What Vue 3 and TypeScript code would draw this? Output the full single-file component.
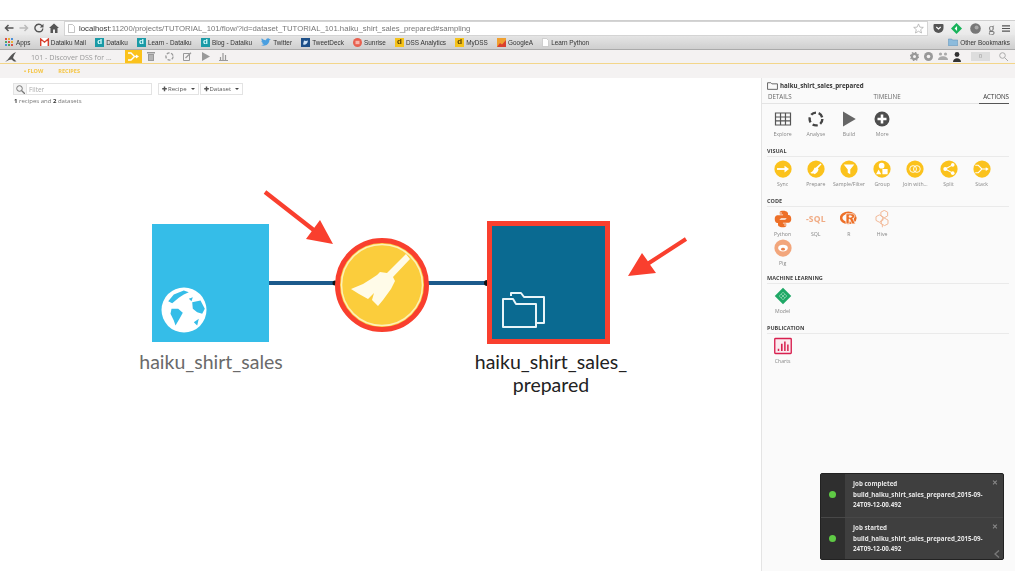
<script setup lang="ts">
interface Bookmark {
  label: string
  icon: string
}
interface Action {
  label: string
  icon: string
}
interface Section {
  title: string
  wrap?: boolean
  items: Action[]
}

const bookmarks: Bookmark[] = [
  { label: 'Dataiku Mail', icon: 'mail' },
  { label: 'Dataiku', icon: 'teal' },
  { label: 'Learn - Dataiku', icon: 'teal' },
  { label: 'Blog - Dataiku', icon: 'teal' },
  { label: 'Twitter', icon: 'bird' },
  { label: 'TweetDeck', icon: 'deck' },
  { label: 'Sunrise', icon: 'sun' },
  { label: 'DSS Analytics', icon: 'gold' },
  { label: 'MyDSS', icon: 'gold' },
  { label: 'GoogleA', icon: 'ga' },
  { label: 'Learn Python', icon: 'page' },
]

const icons: Record<string, string> = {
  table:
    '<path fill="none" stroke="#555" stroke-width="1.6" d="M2 4h20v16H2zM2 9.3h20M2 14.6h20M8.7 4v16M15.3 4v16"/>',
  analyse:
    '<circle cx="12" cy="12" r="8.5" fill="none" stroke="#444" stroke-width="3.2" stroke-dasharray="7 3.68"/>',
  build: '<path fill="#666" d="M4 2l17 10L4 22z"/>',
  more: '<circle cx="12" cy="12" r="10" fill="#4d4d4d"/><path stroke="#fff" stroke-width="3.4" d="M12 6v12M6 12h12"/>',
  sync: '<circle cx="12" cy="12" r="11.5" fill="#fbc21c"/><path fill="none" stroke="#fff" stroke-width="2.4" d="M4 12h12"/><path fill="#fff" d="M14 7.5l6 4.5-6 4.5z"/>',
  prepare:
    '<circle cx="12" cy="12" r="11.5" fill="#fbc21c"/><path fill="#fff" d="M18 4.5l1.4 1.3-5 5.4 1 1.2c-.4 3-2.6 5.4-5.2 6.6l-1.4-1.2-.8.7-1-1-1.5.4-.9-1.2c2.3-.4 4.3-2.6 5.4-6.3l1.5-.1z"/>',
  filter:
    '<circle cx="12" cy="12" r="11.5" fill="#fbc21c"/><path fill="#fff" d="M5 6h14l-5.3 6.5V19l-3.4-2v-4.5z"/>',
  group:
    '<circle cx="12" cy="12" r="11.5" fill="#fbc21c"/><circle cx="11.5" cy="7.5" r="3.8" fill="#fff"/><path fill="#fff" d="M4 19l3.5-6.5L11 19z"/><path fill="#fff" d="M12.5 12h7v7h-7z"/>',
  join: '<circle cx="12" cy="12" r="11.5" fill="#fbc21c"/><circle cx="9.5" cy="12" r="4.5" fill="none" stroke="#fff" stroke-width="1.2"/><circle cx="14.5" cy="12" r="4.5" fill="none" stroke="#fff" stroke-width="1.2"/>',
  split:
    '<circle cx="12" cy="12" r="11.5" fill="#fbc21c"/><path fill="none" stroke="#fff" stroke-width="1.5" d="M17 6.5L7 12l10 5.5"/><circle cx="7" cy="12" r="2.6" fill="#fff"/><circle cx="17" cy="6.5" r="2.4" fill="#fff"/><circle cx="17" cy="17.5" r="2.4" fill="#fff"/>',
  stack:
    '<circle cx="12" cy="12" r="11.5" fill="#fbc21c"/><path fill="none" stroke="#fff" stroke-width="1.5" d="M3 7h4l5 5-5 5H3M12 12h7"/><path fill="#fff" d="M17 9.5l4 2.5-4 2.5z"/>',
  python:
    '<path fill="#ed6f27" d="M11.8 1C7.5 1 7.7 3 7.7 3v3h4.4v1H5.5S1 6.5 1 12s3.8 5.3 3.8 5.3h2.3v-2.6s-.1-3.8 3.7-3.8h4.4s3.5 0 3.5-3.4V4.5S18.3 1 11.8 1zM9.3 3a1 1 0 110 2 1 1 0 010-2z"/><path fill="#ed6f27" d="M12.2 23c4.3 0 4.1-2 4.1-2v-3h-4.4v-1h6.6s4.5.5 4.5-5-3.8-5.3-3.8-5.3h-2.3v2.6s.1 3.8-3.7 3.8H8.8s-3.5 0-3.5 3.4v3.5S5.7 23 12.2 23zm2.5-2a1 1 0 110-2 1 1 0 010 2z"/>',
  r: '<ellipse cx="11" cy="10.5" rx="9.5" ry="6.8" fill="none" stroke="#ed6f27" stroke-width="3.4"/><path fill="#ed6f27" stroke="#fafafa" stroke-width="1" d="M8 5h8.5c4 0 4.5 5.5.5 6.2l3.5 7.3h-4.700L13 12.200h-.8v6.300H8zm4.200 2.700v1.800h2.300c1.500 0 1.500-1.800 0-1.800z"/>',
  hive: '<g fill="none" stroke="#f2b795" stroke-width="1.3"><path d="M15 .5l4.500 2.400v5l-4.500 2.400-4.500-2.400v-5zM8.500 6.500l4.500 2.400v5l-4.500 2.400L4 13.900v-5zM15.500 11l4.500 2.400v5l-4.500 2.400-4.500-2.400v-5zM9 17l3.500 2v4"/></g>',
  pig: '<circle cx="12" cy="12" r="11.5" fill="#f2a67c"/><ellipse cx="12" cy="12" rx="6.5" ry="4.5" fill="#fff"/><ellipse cx="12" cy="13.5" rx="2.6" ry="1.8" fill="#e9824b"/>',
  model:
    '<path fill="#1fa866" d="M12 1l11 11-11 11L1 12z"/><path fill="none" stroke="#bfead2" stroke-width=".8" d="M7 12l5-5 5 5-5 5zM9.500 9.500l5 5M14.500 9.500l-5 5"/>',
  charts:
    '<rect x="1" y="2" width="22" height="20" rx="1" fill="#fbeaef" stroke="#d8204f" stroke-width="1.8"/><path fill="#d8204f" d="M5 15.500h2v3H5zM9.300 9h2.200v9.500H9.300zM13.500 6h2v12.500h-2zM17.500 10h2v8.500h-2z"/>',
}

const sections: Section[] = [
  {
    title: '',
    items: [
      { label: 'Explore', icon: 'table' },
      { label: 'Analyse', icon: 'analyse' },
      { label: 'Build', icon: 'build' },
      { label: 'More', icon: 'more' },
    ],
  },
  {
    title: 'VISUAL',
    items: [
      { label: 'Sync', icon: 'sync' },
      { label: 'Prepare', icon: 'prepare' },
      { label: 'Sample/Filter', icon: 'filter' },
      { label: 'Group', icon: 'group' },
      { label: 'Join with...', icon: 'join' },
      { label: 'Split', icon: 'split' },
      { label: 'Stack', icon: 'stack' },
    ],
  },
  {
    title: 'CODE',
    wrap: true,
    items: [
      { label: 'Python', icon: 'python' },
      { label: 'SQL', icon: 'sql' },
      { label: 'R', icon: 'r' },
      { label: 'Hive', icon: 'hive' },
      { label: 'Pig', icon: 'pig' },
    ],
  },
  { title: 'MACHINE LEARNING', items: [{ label: 'Model', icon: 'model' }] },
  { title: 'PUBLICATION', items: [{ label: 'Charts', icon: 'charts' }] },
]

const toasts = [
  { title: 'Job completed', body: 'build_haiku_shirt_sales_prepared_2015-09-24T09-12-00.492' },
  { title: 'Job started', body: 'build_haiku_shirt_sales_prepared_2015-09-24T09-12-00.492' },
]
</script>

<template>
  <div class="page">
    <div class="chrome">
      <div class="top-strip"></div>
      <div class="toolbar">
        <div class="nav">
          <svg width="10" height="10" viewBox="0 0 10 10"><path fill="none" stroke="#555" stroke-width="1.5" d="M9.5 5H1.500M4.500 2L1.500 5l3 3" /></svg>
          <svg width="10" height="10" viewBox="0 0 10 10"><path fill="none" stroke="#bbb" stroke-width="1.5" d="M.5 5h8M5.500 2l3 3-3 3" /></svg>
          <svg width="10" height="10" viewBox="0 0 10 10"><path fill="none" stroke="#555" stroke-width="1.4" d="M8 3A3.800 3.800 0 104.800 8.800 3.800 3.800 0 008.800 5.500" /><path fill="#555" d="M9.500 .8v3.700H5.800z" /></svg>
          <svg width="10" height="10" viewBox="0 0 10 10"><path fill="#555" d="M5 .5L10 5H8.500v5H6V6.500H4V10H1.500V5H0z" /></svg>
        </div>
        <div class="url">
          <svg width="7" height="9" viewBox="0 0 7 9"><path fill="#fff" stroke="#aaa" stroke-width=".7" d="M.5.500h4l2 2v6h-6z" /></svg>
          <span class="host">localhost</span><span>:11200/projects/TUTORIAL_101/flow/?id=dataset_TUTORIAL_101.haiku_shirt_sales_prepared#sampling</span>
          <svg class="star" width="11" height="11" viewBox="0 0 24 24"><path fill="none" stroke="#aaa" stroke-width="1.6" d="M12 2l3 7 7.500.6-5.700 4.900 1.800 7.300L12 18l-6.600 3.800 1.800-7.300L1.500 9.600 9 9z" /></svg>
        </div>
        <div class="exts">
          <svg width="11" height="9" viewBox="0 0 10 9"><path fill="#555" d="M0 1a1 1 0 011-1h8a1 1 0 011 1v3a5 5 0 01-10 0z" /><path fill="none" stroke="#fff" stroke-width="1.2" d="M2.800 3L5 5l2.200-2" /></svg>
          <svg width="11" height="11" viewBox="0 0 10 10"><path fill="#19b35a" d="M5 0l5 5-5 5-5-5z" /><path fill="#fff" d="M5.500 2.800v4.400L3.300 5z" /></svg>
          <svg width="11" height="11" viewBox="0 0 10 10"><circle cx="5" cy="5" r="4.800" fill="#777" /><circle cx="6" cy="4" r="1.800" fill="#aaa" /></svg>
          <span class="g-ext">g</span>
          <svg width="8" height="7" viewBox="0 0 8 7"><path stroke="#555" stroke-width="1.2" d="M0 .8h8M0 3.500h8M0 6.200h8" /></svg>
        </div>
      </div>
      <div class="bookmarks">
        <div class="bookmark apps-mark">
          <svg width="8" height="8" viewBox="0 0 8 8">
            <path fill="#d9534a" d="M0 0h2v2H0z" /><path fill="#e8b23a" d="M3 0h2v2H3z" /><path fill="#4a90d9" d="M6 0h2v2H6z" />
            <path fill="#4aa564" d="M0 3h2v2H0z" /><path fill="#d9534a" d="M3 3h2v2H3z" /><path fill="#e8b23a" d="M6 3h2v2H6z" />
            <path fill="#4a90d9" d="M0 6h2v2H0z" /><path fill="#4aa564" d="M3 6h2v2H3z" /><path fill="#d9534a" d="M6 6h2v2H6z" />
          </svg>
          <span>Apps</span>
        </div>
        <div v-for="mark in bookmarks" :key="mark.label" class="bookmark">
          <span v-if="mark.icon === 'teal'" class="fav-d teal">d</span>
          <span v-else-if="mark.icon === 'gold'" class="fav-d gold">d</span>
          <svg v-else-if="mark.icon === 'mail'" width="9" height="8" viewBox="0 0 9 8"><path fill="#fff" d="M0 0h9v8H0z" /><path fill="none" stroke="#d9402f" stroke-width="1.4" d="M.7 8V1l3.800 3.200L8.300 1v7" /></svg>
          <svg v-else-if="mark.icon === 'bird'" width="10" height="8" viewBox="0 0 10 8"><path fill="#4a9fe0" d="M0 7c3 1.500 8 .5 8.500-5L10 1 8.500 1C7.500-.3 5 .3 5 2.300 3.300 2.200 1.800 1.400.7.300.2 1.500.5 2.600 1.300 3.200L.4 3c0 1 .7 1.800 1.700 2l-.9.100C1.500 5.800 2.200 6.200 3 6.200 2.200 6.800 1.100 7.100 0 7z" /></svg>
          <svg v-else-if="mark.icon === 'deck'" width="9" height="9" viewBox="0 0 9 9"><path fill="#1d4f88" d="M0 0h9v9H0z" /><path fill="#cfe3f5" d="M2 6.500c2 .5 4.500 0 5-4L5 3 3 2.500z" /></svg>
          <svg v-else-if="mark.icon === 'sun'" width="9" height="9" viewBox="0 0 9 9"><circle cx="4.500" cy="4.500" r="4.500" fill="#e8604f" /><rect x="2.500" y="2.800" width="4" height="3.400" fill="#f7b6ac" /></svg>
          <svg v-else-if="mark.icon === 'ga'" width="9" height="9" viewBox="0 0 9 9"><path fill="#f0a030" d="M0 0h9v9H0z" /><path fill="#d9402f" d="M0 9l3-4 2 1.500L9 2v7z" /></svg>
          <svg v-else width="7" height="9" viewBox="0 0 7 9"><path fill="#fff" stroke="#bbb" stroke-width=".6" d="M.5.500h4l2 2v6h-6z" /></svg>
          <span>{{ mark.label }}</span>
        </div>
        <div class="bookmark other">
          <svg width="10" height="8" viewBox="0 0 10 8"><path fill="#8cbbdc" stroke="#5c8fb5" stroke-width=".5" d="M.3 1h3.500l.7 1h5.200v5.700H.3z" /></svg>
          <span>Other Bookmarks</span>
        </div>
      </div>
    </div>

    <div class="appbar">
      <svg class="logo" width="12" height="10" viewBox="0 0 12 10"><path fill="#555" d="M0 10c2-1.500 3.500-3.500 5.500-6C7 2 9 .8 11 0 9.500 2 8.500 4 8 6l3.500 3.500H9L6.500 7.500 4 8z" /></svg>
      <span class="project">101 - Discover DSS for ...</span>
      <div class="flow-tab">
        <svg width="11" height="9" viewBox="0 0 11 9"><path fill="none" stroke="#fff" stroke-width="1.4" d="M0 1h3l3.500 3.500L3 8H0M6.500 4.500H9" /><path fill="#fff" d="M8 2.500l3 2-3 2z" /></svg>
      </div>
      <div class="app-icons">
        <svg width="8" height="9" viewBox="0 0 8 9"><path fill="#999" d="M0 0h8v1.500H0zM1 2h6v7H1z" /><path stroke="#f5f3f3" stroke-width=".6" d="M3 3v5M5 3v5" /></svg>
        <svg width="9" height="9" viewBox="0 0 24 24"><circle cx="12" cy="12" r="9.500" fill="none" stroke="#999" stroke-width="3.5" stroke-dasharray="8 3.940" /></svg>
        <svg width="9" height="9" viewBox="0 0 9 9"><path fill="none" stroke="#999" stroke-width="1" d="M.5 1.500h6v7h-6z" /><path stroke="#999" stroke-width="1.2" d="M2.500 6L8 .8" /></svg>
        <svg width="8" height="9" viewBox="0 0 8 9"><path fill="#999" d="M0 0l8 4.500L0 9z" /></svg>
        <svg width="9" height="9" viewBox="0 0 9 9"><path stroke="#999" stroke-width="1.2" d="M1.500 8V5M4 8V1M6.500 8V3M0 8.500h9" /></svg>
      </div>
      <div class="app-right">
        <svg width="9" height="9" viewBox="0 0 24 24"><circle cx="12" cy="12" r="7" fill="none" stroke="#999" stroke-width="6" /><circle cx="12" cy="12" r="11" fill="none" stroke="#999" stroke-width="3" stroke-dasharray="4 4.640" /></svg>
        <svg width="9" height="9" viewBox="0 0 9 9"><circle cx="4.500" cy="4.500" r="4.500" fill="#999" /><circle cx="4.500" cy="4.500" r="1.800" fill="#f5f3f3" /></svg>
        <svg width="10" height="9" viewBox="0 0 10 9"><circle cx="2.500" cy="2" r="1.600" fill="#aaa" /><circle cx="7.500" cy="2" r="1.600" fill="#aaa" /><path fill="#aaa" d="M0 8c0-5 10-5 10 0z" /></svg>
        <svg width="8" height="10" viewBox="0 0 8 10"><circle cx="4" cy="2.500" r="2.400" fill="#333" /><path fill="#333" d="M0 10c0-5 8-5 8 0z" /></svg>
        <span class="badge">0</span>
        <svg width="9" height="9" viewBox="0 0 9 9"><circle cx="3.500" cy="3.500" r="2.800" fill="none" stroke="#aaa" /><path stroke="#aaa" d="M5.500 5.500L9 9" /></svg>
      </div>
    </div>
    <div class="subnav">
      <span class="dot-flow">• FLOW</span>
      <span>RECIPES</span>
    </div>

    <div class="main">
      <div class="canvas">
        <div class="filters">
          <div class="filter-box">
            <span class="filter-icon">
              <svg width="9" height="9" viewBox="0 0 9 9"><circle cx="3.500" cy="3.500" r="2.800" fill="none" stroke="#777" /><path stroke="#777" stroke-width="1.3" d="M5.500 5.500L9 9" /></svg>
            </span>
            <span class="filter-text">Filter</span>
          </div>
          <button class="mini-btn"><b>✚</b> Recipe <i></i></button>
          <button class="mini-btn"><b>✚</b> Dataset <i></i></button>
        </div>
        <div class="counts"><b>1</b> recipes and <b>2</b> datasets</div>

        <svg class="flow-lines" width="761" height="493" viewBox="0 78 761 493">
          <path stroke="#1c5a8c" stroke-width="4" d="M269 283h66M424 283h63" />
          <circle cx="335" cy="283" r="2.500" fill="#111" />
          <circle cx="487" cy="283" r="3" fill="#111" />
          <path fill="#f93f2e" d="M263.700 193.700L266.300 190.300L314.300 227.800L320 220L333 244L306 239L311.700 231.200z" />
          <path fill="#f93f2e" d="M684.900 237.300L687.100 240.700L650.100 264.700L656 273L628 276L642 253L647.900 261.300z" />
        </svg>

        <div class="node source">
          <svg class="globe" width="46" height="46" viewBox="0 0 46 46">
            <circle cx="23" cy="23" r="22.500" fill="#fff" />
            <path fill="#35bde8" d="M7.200 14.200L12.800 7.500 22.800 3.500 27.800 5.200 22.800 7.500 17.800 10.800 11.200 16.200zM10.500 21.800H17.200L21.800 25.800 18.500 31.800 14.500 38.500 12.800 33.500 9.500 26.800zM31.200 15.200L39.500 13.500 43.800 21.800 41.200 26.800 36.200 25.200 31.800 21.800zM32.800 35.200L37.800 31.800 36.200 38.500zM27.800 11.800L31.800 10.200 30.500 14.200z" />
          </svg>
        </div>
        <div class="node-label source-label">haiku_shirt_sales</div>

        <div class="recipe">
          <svg width="94" height="96" viewBox="0 0 94 96">
            <circle cx="47" cy="48" r="44.500" fill="#fbcd3c" stroke="#f93f2e" stroke-width="5" />
            <circle cx="47" cy="48" r="40.500" fill="none" stroke="#fdf0b8" stroke-width="1.5" />
            <path fill="#fffbe8" d="M71 17L75 22 58 40 60 44 56 52 48 63 43 69 37 63 39 56 33 62 24 57 16 52 28 47 36 42 42 38 45 35 52 36z" />
          </svg>
        </div>

        <div class="node output">
          <svg class="folder" width="46" height="40" viewBox="0 0 46 40">
            <path fill="none" stroke="#e8f4f8" stroke-width="2" stroke-linejoin="round" d="M10 6V3h10l3 4h20v26h-7M2 37V9h10l3 5h20v23z" />
          </svg>
        </div>
        <div class="node-label output-label">haiku_shirt_sales_<br />prepared</div>
      </div>

      <aside class="panel">
        <div class="panel-title">
          <svg width="11" height="9" viewBox="0 0 10 8"><path fill="none" stroke="#555" stroke-width=".8" d="M.5 7.500V1.500h3l1 1h5v5z" /></svg>
          <b>haiku_shirt_sales_prepared</b>
        </div>
        <div class="tabs">
          <span>DETAILS</span>
          <span>TIMELINE</span>
          <span class="tab-active">ACTIONS</span>
        </div>
        <section v-for="section in sections" :key="section.title" class="actions-section">
          <h4 v-if="section.title">{{ section.title }}</h4>
          <div class="action-grid" :class="{ 'grid-wrap': section.wrap }">
            <div v-for="item in section.items" :key="item.label" class="action">
              <span v-if="item.icon === 'sql'" class="sql-icon">SQL</span>
              <svg v-else width="18" height="18" viewBox="0 0 24 24" v-html="icons[item.icon]"></svg>
              <span class="action-label">{{ item.label }}</span>
            </div>
          </div>
        </section>
      </aside>
    </div>

    <div class="toast-stack">
      <div v-for="toast in toasts" :key="toast.title" class="toast">
        <div class="toast-side"><span class="toast-dot"></span></div>
        <div class="toast-body">
          <span class="toast-close">✕</span>
          <b>{{ toast.title }}</b>
          <b>{{ toast.body }}</b>
        </div>
      </div>
      <svg class="toast-arrow" width="6" height="8" viewBox="0 0 6 8"><path fill="none" stroke="#777" stroke-width="1.5" d="M5 .5L1 4l4 3.500" /></svg>
    </div>
  </div>
</template>

<style scoped>
.page {
  position: relative;
  width: 1015px;
  height: 571px;
  overflow: hidden;
  background: #fff;
  font-family: "Open Sans", "Liberation Sans", sans-serif;
  color: #555;
}
.chrome,
.appbar,
.subnav,
.filters,
.counts,
.panel {
  filter: blur(0.35px);
}
.top-strip {
  height: 20px;
  background: #fff;
}
.toolbar {
  display: flex;
  align-items: center;
  height: 14px;
  padding: 0 0 0 4px;
  border-top: 1px solid #cfcfcf;
  background: linear-gradient(#f3f3f3, #e9e9e9);
}
.nav {
  display: flex;
  align-items: center;
  gap: 5px;
  width: 60px;
}
.url {
  display: flex;
  align-items: center;
  flex: 1;
  height: 13px;
  padding: 0 3px;
  background: #fff;
  border: 1px solid #d4d4d4;
  font-family: "Liberation Sans", sans-serif;
  font-size: 7.75px;
  color: #777;
  white-space: nowrap;
}
.url svg:first-child {
  margin-right: 4px;
}
.host {
  color: #333;
}
.star {
  margin-left: auto;
}
.exts {
  display: flex;
  align-items: center;
  justify-content: space-between;
  box-sizing: border-box;
  width: 87px;
  padding: 0 5px;
}
.g-ext {
  font-family: "Liberation Serif", serif;
  font-size: 13px;
  line-height: 10px;
  color: #777;
}
.bookmarks {
  display: flex;
  align-items: center;
  gap: 9.2px;
  height: 14px;
  padding-left: 5px;
  background: linear-gradient(#e6e6e6, #cfcfcf);
  border-bottom: 1px solid #aaa;
  font-family: "Liberation Sans", sans-serif;
  font-size: 6.4px;
  color: #333;
}
.bookmark {
  display: flex;
  align-items: center;
  gap: 2px;
  white-space: nowrap;
}
.apps-mark {
  gap: 3px;
}
.other {
  margin-left: auto;
  margin-right: 5px;
}
.fav-d {
  display: block;
  width: 9px;
  height: 9px;
  font-size: 8px;
  font-weight: 700;
  line-height: 8px;
  text-align: center;
}
.teal {
  background: #1a9aa6;
  color: #dff;
}
.gold {
  background: #f5c21a;
  color: #5a4300;
}
.appbar {
  display: flex;
  align-items: center;
  height: 13px;
  background: #f4f2f2;
  border-bottom: 1px solid #f3d68a;
}
.logo {
  margin-left: 5px;
}
.project {
  width: 94px;
  margin-left: 14px;
  font-size: 7.15px;
  color: #999;
  white-space: nowrap;
}
.flow-tab {
  display: flex;
  align-items: center;
  justify-content: center;
  width: 17px;
  height: 13px;
  background: #fbc21c;
}
.app-icons {
  display: flex;
  align-items: center;
  gap: 9.5px;
  margin-left: 5px;
}
.app-right {
  display: flex;
  align-items: center;
  gap: 5px;
  margin-left: auto;
  padding-right: 7px;
}
.badge {
  width: 19px;
  margin: 0 4px 0 5px;
  background: #ddd;
  font-size: 6px;
  line-height: 9px;
  text-align: center;
  color: #999;
}
.subnav {
  display: flex;
  align-items: center;
  gap: 15px;
  height: 14px;
  padding-left: 24px;
  background: #f4f2f2;
  font-size: 5.5px;
  font-weight: 700;
  color: #f5c542;
}
.main {
  display: flex;
  height: 493px;
}
.canvas {
  position: relative;
  flex: 1;
  padding: 5px 0 0 13px;
  background: #fff;
}
.filters {
  display: flex;
  align-items: center;
  gap: 1px;
}
.filter-box {
  display: flex;
  align-items: center;
  width: 139px;
  height: 12px;
  margin-right: 5px;
  box-sizing: border-box;
  border: 1px solid #e3e3e3;
  background: #fff;
}
.filter-icon {
  display: flex;
  align-items: center;
  justify-content: center;
  width: 12px;
  height: 100%;
  background: #f4f4f4;
  border-right: 1px solid #e3e3e3;
}
.filter-text {
  margin-left: 2px;
  font-size: 6.5px;
  color: #aaa;
}
.mini-btn {
  display: flex;
  align-items: center;
  justify-content: center;
  gap: 1px;
  height: 12px;
  padding: 0 3px;
  background: #fff;
  border: 1px solid #e3e3e3;
  font-family: inherit;
  font-size: 6px;
  color: #555;
}
.mini-btn b {
  font-size: 6px;
}
.mini-btn i {
  width: 0;
  height: 0;
  margin-left: 3px;
  border: 2px solid transparent;
  border-top: 2.5px solid #444;
  border-bottom: 0;
}
.counts {
  margin-top: 2px;
  margin-left: 1px;
  font-size: 6px;
  line-height: 9px;
  color: #777;
}
.counts b {
  color: #333;
}
.flow-lines {
  position: absolute;
  left: 0;
  top: 0;
}
.node {
  position: absolute;
  display: flex;
  align-items: flex-end;
  box-sizing: border-box;
}
.source {
  left: 152px;
  top: 146px;
  width: 117px;
  height: 118px;
  padding: 0 0 9px 9px;
  background: #35bde8;
}
.output {
  left: 487px;
  top: 143px;
  width: 123px;
  height: 123px;
  padding: 0 0 9px 9px;
  background: #0a6a91;
  border: 5px solid #f93f2e;
}
.recipe {
  position: absolute;
  left: 335px;
  top: 159px;
  width: 94px;
  height: 96px;
}
.recipe svg {
  display: block;
}
.node-label {
  position: absolute;
  font-family: "Lato", "Noto Sans", sans-serif;
  font-size: 19.5px;
  line-height: 23px;
  text-align: center;
  white-space: nowrap;
}
.source-label {
  left: 111px;
  top: 272px;
  width: 200px;
  color: #6a6a6a;
}
.output-label {
  left: 451px;
  top: 272px;
  width: 200px;
  color: #222;
}
.panel {
  width: 254px;
  box-sizing: border-box;
  padding: 2px 6px 0 5px;
  background: #fafafa;
  border-left: 1px solid #e4e4e4;
}
.panel-title {
  display: flex;
  align-items: center;
  gap: 2px;
  height: 10px;
  font-size: 6.2px;
  color: #333;
}
.tabs {
  display: flex;
  justify-content: space-between;
  box-sizing: border-box;
  height: 14px;
  margin-left: -5px;
  padding: 2px 0 0 6px;
  border-bottom: 1px solid #e4e4e4;
  font-size: 6.2px;
  line-height: 10px;
  color: #666;
}
.tabs span {
  width: 105px;
}
.tabs .tab-active {
  box-sizing: border-box;
  width: 30px;
  height: 12px;
  border-bottom: 1px solid #555;
  text-align: right;
  color: #333;
}
.actions-section {
  margin-bottom: 8.5px;
}
.actions-section h4 {
  box-sizing: border-box;
  height: 11px;
  margin: 0 0 3px;
  padding-top: 1.5px;
  border-bottom: 1px solid #eaeaea;
  font-size: 5.5px;
  font-weight: 700;
  line-height: 7px;
  color: #444;
}
.action-grid {
  display: grid;
  grid-template-columns: repeat(7, 33.2px);
  row-gap: 1.5px;
  margin-left: -1px;
  padding-top: 6px;
}
.actions-section h4 + .action-grid {
  padding-top: 0;
}
.actions-section h4 + .grid-wrap {
  grid-template-columns: repeat(4, 33.2px);
  margin-bottom: -2px;
}
.action {
  display: flex;
  flex-direction: column;
  align-items: center;
  height: 27.5px;
}
.action svg {
  display: block;
  flex: none;
}
.action-label {
  margin-top: 2.5px;
  font-size: 5.2px;
  line-height: 7px;
  color: #888;
  white-space: nowrap;
}
.sql-icon {
  height: 18px;
  font-size: 8.5px;
  font-weight: 700;
  line-height: 18px;
  letter-spacing: 0.2px;
  color: #f0ab84;
}
.sql-icon::before {
  content: "-";
}
.toast-stack {
  position: absolute;
  left: 820px;
  top: 473px;
  width: 184px;
  height: 87px;
  box-sizing: border-box;
  border: 1px solid #222;
  border-radius: 2px;
  background: #3f3f3f;
  overflow: hidden;
}
.toast {
  display: flex;
  height: 43px;
  border-bottom: 1px solid #484848;
}
.toast-side {
  display: flex;
  align-items: center;
  justify-content: center;
  width: 24px;
  padding-right: 1px;
  box-sizing: border-box;
  background: #2f2f2f;
}
.toast-dot {
  width: 7px;
  height: 7px;
  margin-bottom: 2px;
  border-radius: 50%;
  background: #5fca45;
}
.toast-body {
  position: relative;
  display: flex;
  flex-direction: column;
  flex: 1;
  padding: 5px 16px 0 8px;
  font-size: 6.2px;
  line-height: 10.5px;
  color: #e8e8e8;
  filter: blur(0.3px);
}
.toast-body b {
  word-break: break-word;
}
.toast-close {
  position: absolute;
  top: 4px;
  right: 5px;
  font-size: 7px;
  font-weight: 700;
  color: #888;
}
.toast-arrow {
  position: absolute;
  right: 3px;
  bottom: 1px;
}
</style>

<style>
html,
body {
  margin: 0;
  background: #fff;
}
</style>
